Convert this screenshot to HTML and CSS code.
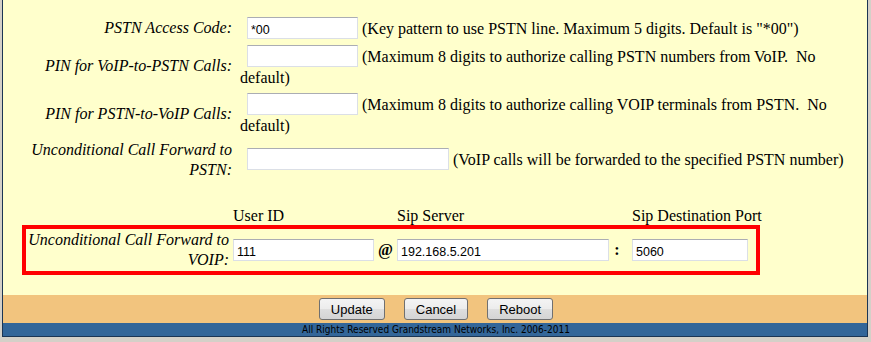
FILE: index.html
```html
<!DOCTYPE html>
<html>
<head>
<meta charset="utf-8">
<title>PSTN Settings</title>
<link rel="stylesheet" href="styles.css">
</head>
<body>
<div class="frame">
  <div class="main">
    <div class="form">
      <div class="lbl">PSTN Access Code:</div>
      <div class="val"><input class="field field-s" type="text" value="*00"> (Key pattern to use PSTN line. Maximum 5 digits. Default is "*00")</div>

      <div class="lbl">PIN for VoIP-to-PSTN Calls:</div>
      <div class="val"><input class="field field-s" type="text" value=""> (Maximum 8 digits to authorize calling PSTN numbers from VoIP.&nbsp; No default)</div>

      <div class="lbl">PIN for PSTN-to-VoIP Calls:</div>
      <div class="val"><input class="field field-s" type="text" value=""> (Maximum 8 digits to authorize calling VOIP terminals from PSTN.&nbsp; No default)</div>

      <div class="lbl">Unconditional Call Forward to PSTN:</div>
      <div class="val val-up"><input class="field field-m" type="text" value=""> (VoIP calls will be forwarded to the specified PSTN number)</div>
    </div>

    <div class="fwd">
      <div class="fwd-grid fwd-head">
        <span></span>
        <span>User ID</span>
        <span></span>
        <span>Sip Server</span>
        <span></span>
        <span>Sip Destination Port</span>
      </div>
      <div class="fwd-grid fwd-box">
        <div class="lbl lbl-fwd">Unconditional Call Forward to VOIP:</div>
        <input class="field field-user" type="text" value="111">
        <span class="sep">@</span>
        <input class="field field-server" type="text" value="192.168.5.201">
        <span class="sep sep-colon">:</span>
        <input class="field field-port" type="text" value="5060">
      </div>
    </div>
  </div>

  <div class="actions">
    <button class="btn" type="button">Update</button>
    <button class="btn" type="button">Cancel</button>
    <button class="btn" type="button">Reboot</button>
  </div>

  <div class="footer">All Rights Reserved Grandstream Networks, Inc. 2006-2011</div>
</div>
</body>
</html>
```

FILE: styles.css
```css
html, body {
  margin: 0;
  padding: 0;
}

body {
  background: #d4d0c8;
  font-family: "Liberation Serif", "Times New Roman", serif;
  color: #000;
}

.frame {
  width: 866px;
  box-sizing: border-box;
  margin-left: 2px;
  border-left: 1px solid #1b3554;
  border-right: 1px solid #1b3554;
  border-bottom: 1px solid #1b3554;
}

.main {
  background: #ffffcc;
  padding: 16px 0 20px;
}

.form {
  display: grid;
  grid-template-columns: 229px 620px;
  column-gap: 8px;
  row-gap: 4px;
  font-size: 16px;
  line-height: 20px;
}

.lbl {
  font-style: italic;
  text-align: right;
  display: flex;
  align-items: center;
  justify-content: flex-end;
}

.val {
  align-self: center;
}

.val-up {
  margin-top: -2px;
}

.field {
  box-sizing: border-box;
  height: 22px;
  padding: 3px 3px 0;
  border: 1px solid #dbdfe6;
  border-top-color: #abadb3;
  background: #fff;
  font-family: "Liberation Sans", Arial, sans-serif;
  font-size: 12.5px;
  color: #000;
  vertical-align: baseline;
  outline: none;
}

.val .field {
  margin: 1px 0 1px 7px;
}

.field-s {
  width: 111px;
}

.field-m {
  width: 202px;
}

.fwd {
  margin: 27px 0 0 19px;
  width: 738px;
  font-size: 16px;
}

.fwd-grid {
  display: grid;
  grid-template-columns: 207px 141px 23px 212px 23px 116px;
  column-gap: 0;
}

.fwd-head {
  padding: 0 4px;
  line-height: 18px;
  white-space: nowrap;
}

.fwd-box {
  border: 4px solid #ff0000;
  height: 50px;
  box-sizing: border-box;
  align-items: center;
  line-height: 20px;
}

.lbl-fwd {
  padding-right: 4px;
}

.sep {
  font-weight: bold;
  text-align: center;
}

.sep-colon {
  padding-right: 7px;
}

.actions {
  background: #f2c47e;
  height: 28px;
  display: flex;
  align-items: center;
  justify-content: center;
  gap: 19px;
  padding-left: 2px;
}

.btn {
  height: 22px;
  padding: 0 11px;
  border: 1px solid #707070;
  border-radius: 3px;
  background: linear-gradient(#f4f4f4 0%, #ececec 50%, #dedede 51%, #d4d4d4 100%);
  font-family: "Liberation Sans", Arial, sans-serif;
  font-size: 13px;
  color: #000;
}

.footer {
  background: #336699;
  height: 13px;
  line-height: 13px;
  text-align: center;
  font-family: Tahoma, "DejaVu Sans Condensed", "DejaVu Sans", sans-serif;
  font-stretch: condensed;
  font-size: 10px;
  color: #000;
  padding-left: 2px;
}
```
